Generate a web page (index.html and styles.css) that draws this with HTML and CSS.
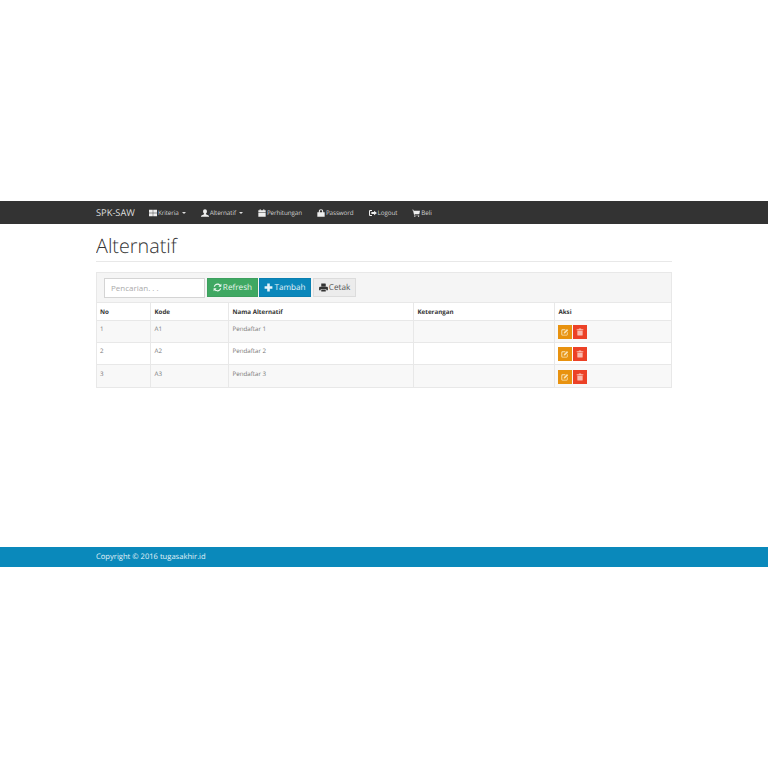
FILE: index.html
```html
<!DOCTYPE html>
<html lang="id">
<head>
<meta charset="utf-8">
<title>Alternatif</title>
<link rel="stylesheet" href="styles.css">
</head>
<body>
<svg class="defs" width="0" height="0" aria-hidden="true">
  <symbol id="i-list" viewBox="0 0 12 12"><path d="M0 1h5.700v4.500H0zM6.300 1H12v4.500H6.300zM0 6.500h5.700V11H0zM6.300 6.500H12V11H6.300z"/></symbol>
  <symbol id="i-user" viewBox="0 0 12 12"><path d="M6 .5c1.800 0 2.900 1.300 2.900 3.100 0 1.400-.7 2.600-1.500 3.200v.9l3.300 1.500c.8.400 1.300.8 1.300 1.300v1H0v-1c0-.5.500-.9 1.300-1.300l3.300-1.500v-.9C3.800 6.200 3.100 5 3.100 3.600 3.100 1.800 4.200.5 6 .5z"/></symbol>
  <symbol id="i-cal" viewBox="0 0 12 12"><path d="M2.500.5h1.500v1.500h4V.5h1.500v1.500H11.500v2.500H.5V2h2zM.5 5.200h11v6.300H.5z"/></symbol>
  <symbol id="i-lock" viewBox="0 0 12 12"><path fill-rule="evenodd" d="M6 .5c2 0 3.300 1.300 3.300 3.300V5h2.200v6.500H.5V5h2.200V3.800C2.700 1.800 4 .5 6 .5zM4.300 5h3.400V3.800C7.700 2.700 7.100 2 6 2s-1.700.7-1.700 1.800z"/></symbol>
  <symbol id="i-logout" viewBox="0 0 12 12"><path d="M4.500 1.500v1.500H2.300c-.5 0-.8.300-.8.800v4.400c0 .5.300.8.8.8h2.200v1.500H2C.9 10.500 0 9.700 0 8.500v-5C0 2.300.9 1.500 2 1.500zM7.500 2.500 12 6 7.500 9.500V7.500H3.500v-3h4z"/></symbol>
  <symbol id="i-cart" viewBox="0 0 12 12"><path d="M0 1h2.200l.4 1.500H12l-1 5H3.800l.2 1h7v1H3.200L1.500 2H0z"/><circle cx="4.200" cy="10.800" r="1"/><circle cx="9.800" cy="10.800" r="1"/></symbol>
  <symbol id="i-refresh" viewBox="0 0 12 12"><path d="M6 .8c1.500 0 2.800.6 3.700 1.600L11.200 1v4H7.200l1.400-1.500C7.900 2.800 7 2.400 6 2.400c-1.600 0-3 1.100-3.400 2.600H1C1.400 2.600 3.500.8 6 .8zM.8 7h4L3.400 8.500c.7.700 1.600 1.100 2.600 1.100 1.600 0 3-1.100 3.400-2.600H11c-.4 2.400-2.500 4.200-5 4.200-1.500 0-2.800-.6-3.700-1.600L.8 11z"/></symbol>
  <symbol id="i-plus" viewBox="0 0 12 12"><path d="M4.300.8h3.400v3.500h3.500v3.400H7.700v3.500H4.300V7.700H.8V4.300h3.500z"/></symbol>
  <symbol id="i-print" viewBox="0 0 12 12"><path d="M3 .8h5.500l.5.500v3.200H3zM1.300 5h9.400c.7 0 1.200.5 1.200 1.200v3.600H9.700V8H2.300v1.800H.1V6.200C.1 5.500.6 5 1.300 5zM3 8.800h6v2.400H3z"/></symbol>
  <symbol id="i-edit" viewBox="0 0 12 12"><path fill-rule="evenodd" d="M2.500 2H7L5.800 3.200H2.700c-.5 0-.8.300-.8.800v5.300c0 .5.300.8.8.8H8c.5 0 .8-.3.800-.8V7l1.200-1.200v3.700c0 1.100-.9 1.900-2 1.900H2.500c-1.100 0-2-.8-2-1.900V3.900C.5 2.800 1.400 2 2.500 2zM9 1.500l1.800 1.800-4.800 4.800H4.200V6.300z"/></symbol>
  <symbol id="i-trash" viewBox="0 0 12 12"><path d="M4.500.8h3l.7 1.200H11v1.200H1V2h2.800zM2 4h8v6.500c0 .5-.4.800-.8.800H2.800c-.4 0-.8-.3-.8-.8z"/></symbol>
</svg>

<nav class="navbar">
  <div class="container nav-inner">
    <a class="brand">SPK-SAW</a>
    <ul class="menu">
      <li><svg class="ico"><use href="#i-list"/></svg>Kriteria<span class="caret"></span></li>
      <li><svg class="ico"><use href="#i-user"/></svg>Alternatif<span class="caret"></span></li>
      <li><svg class="ico"><use href="#i-cal"/></svg>Perhitungan</li>
      <li><svg class="ico"><use href="#i-lock"/></svg>Password</li>
      <li><svg class="ico"><use href="#i-logout"/></svg>Logout</li>
      <li><svg class="ico"><use href="#i-cart"/></svg>Beli</li>
    </ul>
  </div>
</nav>

<main class="container main">
  <h1 class="page-title">Alternatif</h1>
  <section class="panel">
    <div class="toolbar">
      <input class="search" type="text" placeholder="Pencarian. . .">
      <a class="btn btn-green"><svg class="btn-ico"><use href="#i-refresh"/></svg>Refresh</a>
      <a class="btn btn-blue"><svg class="btn-ico"><use href="#i-plus"/></svg>Tambah</a>
      <a class="btn btn-grey"><svg class="btn-ico"><use href="#i-print"/></svg>Cetak</a>
    </div>
    <table class="table">
      <colgroup>
        <col class="c-no"><col class="c-kode"><col class="c-nama"><col class="c-ket"><col class="c-aksi">
      </colgroup>
      <thead>
        <tr><th>No</th><th>Kode</th><th>Nama Alternatif</th><th>Keterangan</th><th>Aksi</th></tr>
      </thead>
      <tbody>
        <tr class="odd">
          <td>1</td><td>A1</td><td>Pendaftar 1</td><td></td>
          <td class="actions"><a class="act act-edit"><svg><use href="#i-edit"/></svg></a><a class="act act-del"><svg><use href="#i-trash"/></svg></a></td>
        </tr>
        <tr>
          <td>2</td><td>A2</td><td>Pendaftar 2</td><td></td>
          <td class="actions"><a class="act act-edit"><svg><use href="#i-edit"/></svg></a><a class="act act-del"><svg><use href="#i-trash"/></svg></a></td>
        </tr>
        <tr class="odd">
          <td>3</td><td>A3</td><td>Pendaftar 3</td><td></td>
          <td class="actions"><a class="act act-edit"><svg><use href="#i-edit"/></svg></a><a class="act act-del"><svg><use href="#i-trash"/></svg></a></td>
        </tr>
      </tbody>
    </table>
  </section>
</main>

<footer class="footer">
  <div class="container">Copyright © 2016 tugasakhir.id</div>
</footer>
</body>
</html>
```

FILE: styles.css
```css
* { box-sizing: border-box; }
html, body { margin: 0; background: #fff; }
body {
  padding-top: 201px;
  font-family: "Open Sans", "Liberation Sans", sans-serif;
  color: #333;
  font-size: 7px;
  text-rendering: geometricPrecision;
}
.defs { position: absolute; }
.container { width: 576px; margin: 0 auto; }

.navbar { height: 23px; background: #333; color: #d0d0d0; opacity: 0.999; }
.nav-inner { display: flex; align-items: center; height: 100%; }
.brand { font-size: 9.300px; color: #ddd; width: 53px; }
.menu { display: flex; list-style: none; margin: 0; padding: 0; font-size: 6.300px; letter-spacing: -0.1px; }
.menu li { display: flex; align-items: center; margin-right: 15px; }
.ico { width: 8px; height: 8px; fill: #eee; margin-right: 1px; }
.caret {
  width: 0; height: 0; margin-left: 3px;
  border-left: 2px solid transparent;
  border-right: 2px solid transparent;
  border-top: 2px solid #ddd;
}

.main { height: 323px; padding-top: 9px; opacity: 0.999; }
.page-title {
  margin: 0 0 10px;
  height: 29px;
  font-size: 19.800px;
  line-height: 25px;
  font-weight: 300;
  color: #333;
  border-bottom: 1px solid #e8e8e8;
}

.panel { border: 1px solid #e8e8e8; }
.toolbar {
  display: flex;
  align-items: center;
  height: 30px;
  padding-left: 7px;
  background: #f5f5f5;
  border-bottom: 1px solid #e8e8e8;
}
.search {
  width: 101px;
  height: 20px;
  margin-right: 2px;
  padding: 0 6px;
  border: 1px solid #d4d4d4;
  background: #fff;
  font: 8px "Open Sans", sans-serif;
  outline: none;
}
.search::placeholder { color: #aaa; opacity: 1; }
.btn {
  display: flex;
  align-items: center;
  justify-content: center;
  height: 19px;
  font-size: 8.200px;
  border: 1px solid transparent;
  margin-right: 1px;
}
.btn-ico { width: 9px; height: 9px; margin-right: 1px; fill: currentColor; }
.btn-green { width: 51px; background: #3fa862; border-color: #3d9f5e; color: #e8f6ed; }
.btn-blue { width: 52px; background: #0a87bb; border-color: #0a7fb0; color: #e6f4fa; }
.btn-grey { width: 43px; margin-left: 1px; background: #ececec; border-color: #dcdcdc; color: #555; }
.btn-grey .btn-ico { fill: #333; }

.table { width: 100%; border-collapse: collapse; table-layout: fixed; font-size: 6.200px; }
.c-no { width: 53px; }
.c-kode { width: 78px; }
.c-nama { width: 185px; }
.c-ket { width: 141px; }
.table th, .table td {
  padding: 0 0 0 4px;
  border: 1px solid #e8e8e8;
  text-align: left;
}
.table tr > :first-child { border-left: 0; padding-left: 3px; }
.table tr > :last-child { border-right: 0; }
.table tbody tr:last-child td { border-bottom: 0; }
.table thead tr:first-child th { border-top: 0; }
.table th { height: 17px; font-weight: 700; color: #333; }
.table td { height: 22.330px; padding-bottom: 5px; color: #777; }
.table tbody tr.odd { background: #f8f8f8; }
.table td.actions { padding: 1px 0 0 3px; }
.actions { font-size: 0; }
.act {
  display: inline-flex;
  align-items: center;
  justify-content: center;
  width: 14px;
  height: 14px;
  margin-right: 1px;
}
.act svg { width: 8px; height: 8px; fill: #f8e3b8; }
.act-edit { background: #e8920f; }
.act-del { background: #ec4126; }
.act-del svg { fill: #f9b9ac; }

.footer {
  height: 20px;
  background: #0a89bb;
  color: #e4f3f9;
  font-size: 7.600px;
  line-height: 20px;
}
.footer .container { opacity: 0.999; }
```
